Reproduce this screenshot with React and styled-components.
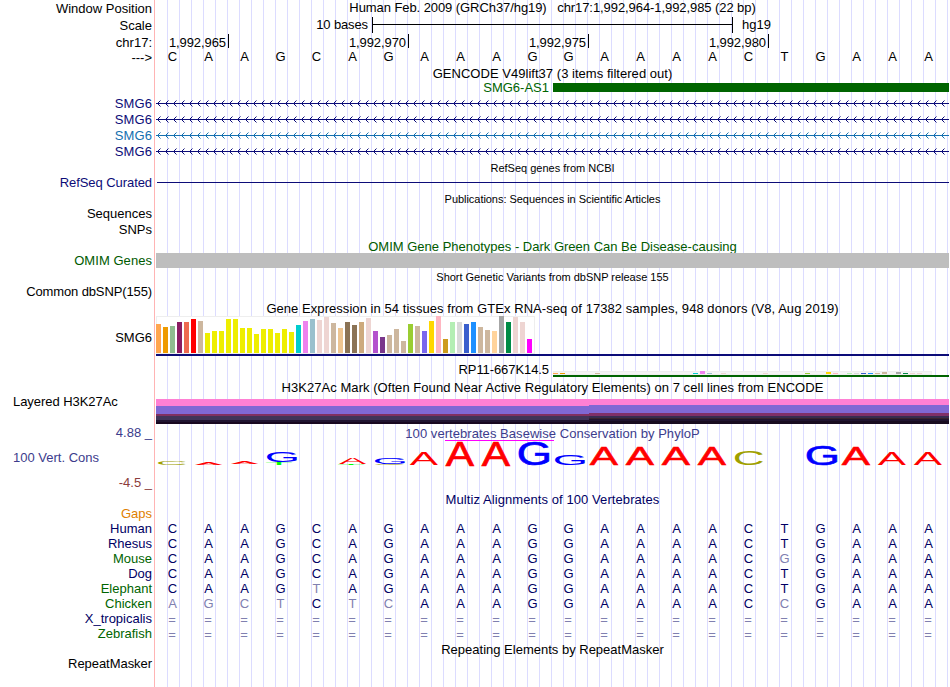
import React from "react";
import styled, { createGlobalStyle } from "styled-components";

const GlobalStyle = createGlobalStyle`
  html, body { margin: 0; padding: 0; background: #fff; }
  body { overflow: hidden; font: 13px/16px "Liberation Sans", Arial, sans-serif; color: #000; }
`;

const NAVY = "#0c0c78";
const ALIGN = "#000064";
const GREEN = "#006400";

const Browser = styled.main`
  display: flex;
  flex-direction: column;
  width: 949px;
  height: 687px;
  overflow: hidden;
  background:
    linear-gradient(#ffb4b4, #ffb4b4) 154px 0 / 1px 100% no-repeat,
    repeating-linear-gradient(90deg, #dcdcff 0 1px, transparent 1px 12px) 167px 0 / 782px 100% no-repeat,
    #fff;
`;

const Row = styled.section`
  display: grid;
  grid-template-columns: 154px 795px;
  flex: none;
  height: ${(p) => p.$h}px;
`;

const Label = styled.div`
  box-sizing: border-box;
  height: 16px;
  margin-top: ${(p) => p.$drop || 0}px;
  padding: ${(p) => (p.$left ? "0 0 0 13px" : "0 2px 0 0")};
  text-align: ${(p) => (p.$left ? "left" : "right")};
  letter-spacing: ${(p) => p.$track || 0}px;
  color: ${(p) => p.$color || "#000"};
  white-space: pre;
`;

const Title = styled.h2`
  grid-column: 2;
  height: 16px;
  margin: ${(p) => p.$drop || 0}px 0 0;
  padding-left: 2px;
  font-weight: normal;
  font-size: ${(p) => (p.$small ? 11 : 13)}px;
  line-height: 16px;
  letter-spacing: ${(p) => p.$track || 0}px;
  text-align: center;
  white-space: pre;
  color: ${(p) => p.$color || "#000"};
`;

const ScaleTrack = styled.div`
  display: flex;
`;
const ScaleText = styled.span`
  width: 214px;
  text-align: right;
  letter-spacing: -0.12px;
`;
const ScaleBar = styled.div`
  box-sizing: border-box;
  width: 361px;
  height: 16px;
  margin: 0 9px 0 4px;
  border: solid #000;
  border-width: 0 1px;
  background: linear-gradient(#000, #000) 0 7px / 100% 1px no-repeat;
`;

const TickTrack = styled.div`
  display: grid;
  grid-template-columns: 75px repeat(3, 180px);
`;
const Tick = styled.div`
  height: 14px;
  border-right: 1px solid #000;
  padding-right: 2px;
  line-height: 18px;
  letter-spacing: -0.08px;
  text-align: right;
`;

const Bases = styled.div`
  display: grid;
  grid-template-columns: repeat(22, 36px);
  padding-left: ${(p) => (p.$gap ? 0 : 0.5)}px;
  padding-top: ${(p) => (p.$gap ? 1 : 0)}px;
  color: ${(p) => p.$color || "#000"};
`;
const Base = styled.span`
  text-align: center;
  color: ${(p) => (p.$faint ? "#8080b0" : "inherit")};
`;

const ItemTrack = styled.div`
  display: flex;
`;
const ItemLabel = styled.span`
  box-sizing: border-box;
  width: 399px;
  padding-right: 4px;
  padding-top: ${(p) => p.$drop || 0}px;
  text-align: right;
  letter-spacing: ${(p) => p.$track || 0}px;
  color: ${(p) => p.$color || "#000"};
`;
const Exon = styled.div`
  width: 396px;
  height: 9px;
  margin-top: 3px;
  background: #006400;
`;
const Intron = styled.svg`
  display: block;
  width: 793px;
  height: 16px;
  margin-left: 2px;
`;
const ThinLine = styled.div`
  height: 1px;
  margin: 7px 0 0 3px;
  background: ${NAVY};
`;
const GreyBar = styled.div`
  height: 15px;
  margin-left: 2px;
  background: #bebebe;
`;

const ExpressionTrack = styled.div`
  display: flex;
  flex-direction: column;
  width: ${(p) => p.$w}px;
  margin-left: ${(p) => p.$x}px;
  padding-top: ${(p) => p.$drop || 0}px;
`;
const BarBox = styled.div`
  box-sizing: border-box;
  display: flex;
  align-items: flex-end;
  gap: 2px;
  width: 379px;
  height: ${(p) => p.$h}px;
  padding-bottom: 1px;
  background: ${(p) => (p.$flat ? "#f4f4f4" : "#fff")};
  box-shadow: inset 0 0 0 1px #eee;
`;
const Bar = styled.i`
  flex: none;
  width: 5px;
`;
const GeneLine = styled.div`
  height: 2px;
  background: ${(p) => p.$color};
`;

const Signal = styled.div`
  display: grid;
  grid-template-columns: 433px 360px;
  margin-left: 2px;
`;
const SignalPart = styled.div`
  background: ${(p) =>
    p.$high
      ? "linear-gradient(#ff80d4 0 6px, #8068d4 6px 14px, #803068 14px 17px, #382c50 17px 19px, #38242c 19px 20px, #201430 20px 22px, #180c20 22px)"
      : "linear-gradient(#ff80d4 0 7px, #8068d4 7px 15px, #803060 15px 17px, #403458 17px 21px, #201430 21px 23px, #180820 23px)"};
`;

const ConsLabels = styled.div`
  display: flex;
  flex-direction: column;
  gap: 9px;
  padding-top: 1px;
`;
const ConsTrack = styled.div`
  display: flex;
  flex-direction: column;
`;
const Logo = styled.svg`
  display: block;
  width: 795px;
  height: 40px;
  margin-top: -2px;
  overflow: visible;
`;

const HUMAN = "CAAGCAGAAAGGAAAACTGAAA";

const SPECIES = [
  { name: "Human", color: ALIGN, seq: HUMAN, faint: [] },
  { name: "Rhesus", color: ALIGN, seq: HUMAN, faint: [] },
  { name: "Mouse", color: GREEN, seq: "CAAGCAGAAAGGAAAACGGAAA", faint: [17] },
  { name: "Dog", color: ALIGN, seq: HUMAN, faint: [] },
  { name: "Elephant", color: GREEN, seq: "CAAGTAGAAAGGAAAACTGAAA", faint: [4] },
  { name: "Chicken", color: GREEN, seq: "AGCTCTCAAAGGAAAACCGAAA", faint: [0, 1, 2, 3, 5, 6, 17] },
  { name: "X_tropicalis", color: ALIGN, seq: "=".repeat(22), gap: true },
  { name: "Zebrafish", color: GREEN, seq: "=".repeat(22), gap: true },
];

const TISSUES = [
  "#ffa54f", "#ee9a00", "#8fbc8f", "#8b1c62", "#ee6a50", "#ff0000", "#cdb79e",
  ...Array(13).fill("#eeee00"),
  "#00cdcd", "#ee82ee", "#9ac0cd", "#eed5d2", "#eed5d2", "#cdb79e", "#eec591",
  "#8b7355", "#8b7355", "#cdaa7d", "#eed5d2", "#b452cd", "#7a378b", "#cdb79e",
  "#cdb79e", "#cdb79e", "#9acd32", "#cdb79e", "#7a67ee", "#ffd700", "#ffb6c1",
  "#cd9b1d", "#b4eeb4", "#d9d9d9", "#3a5fcd", "#1e90ff", "#cdb79e", "#cdb79e",
  "#ffd39b", "#a6a6a6", "#008b45", "#eed5d2", "#eed5d2", "#ff00ff",
];
const SMG6_LEVELS = [
  29, 26, 27, 31, 31, 34, 32, 20, 22, 22, 34, 34, 25, 25, 19, 24, 24, 20, 24, 21,
  28, 32, 34, 33, 36, 30, 25, 31, 28, 31, 35, 22, 16, 18, 24, 12, 29, 27, 22, 32,
  37, 14, 31, 31, 29, 31, 26, 23, 22, 37, 31, 36, 31, 14,
];
const RP11 = {
  0: 1, 1: 1, 6: 1, 20: 1, 21: 3, 22: 1, 24: 1, 30: 1, 36: 1, 39: 2, 40: 1, 42: 1,
  43: 1, 44: 1, 45: 1, 46: 1, 47: 2, 49: 2, 50: 1, 51: 1, 52: 1,
};
const RP11_LEVELS = TISSUES.map((_, i) => RP11[i] || 0);

const INK = { A: "#ff0000", C: "#a0a000", G: "#0000ff", T: "#00ff00" };
/* letter, left, ink width, ink top, ink bottom */
const LOGO = [
  ["C", 4, 28, 21, 25], ["A", 41, 27, 23, 25], ["A", 77, 27, 22, 24],
  ["T", 112, 26, 22, 25], ["G", 113, 30, 11, 22],
  ["T", 184, 26, 24, 25], ["A", 185, 27, 18, 24],
  ["C", 221, 29, 24, 25], ["G", 221, 30, 18, 24],
  ["A", 256, 28, 12, 25], ["A", 292, 28, 2, 25.5], ["A", 328, 28, 2, 25.5],
  ["G", 365, 30, 2, 25.5], ["G", 401, 30, 14, 25], ["A", 436, 28, 7, 25],
  ["A", 472, 28, 7, 25], ["A", 508, 28, 7, 25], ["A", 544, 28, 7, 25],
  ["C", 581, 28, 11, 25], ["G", 653, 30, 5, 25], ["A", 688, 28, 7, 25],
  ["A", 724, 28, 12, 25], ["A", 760, 28, 12, 25],
];
/* glyph extents per em: [left bearing, ink width, overshoot below baseline, ink height] */
const EXTENT = {
  A: [0.003, 0.661, 0, 0.688],
  C: [0.05, 0.636, -0.01, 0.708],
  G: [0.05, 0.662, -0.01, 0.708],
  T: [0.022, 0.567, 0, 0.688],
};

function LogoLetter({ item: [ch, x, w, top, bottom] }) {
  const [lsb, iw, ib, ih] = EXTENT[ch];
  const sx = w / (iw * 100);
  const sy = (bottom - top) / (ih * 100);
  const tx = x - lsb * 100 * sx;
  const ty = bottom + ib * 100 * sy;
  const weight = bottom - top > 16 ? 2 : 0;
  return (
    <text
      transform={`matrix(${sx} 0 0 ${sy} ${tx} ${ty})`}
      fontSize="100"
      fontFamily="Liberation Sans, Arial, sans-serif"
      fill={INK[ch]}
      stroke={weight ? INK[ch] : "none"}
      strokeWidth={weight}
    >
      {ch}
    </text>
  );
}

function BaseRow({ seq, color, faint = [], gap }) {
  return (
    <Bases $color={color} $gap={gap}>
      {[...seq].map((b, i) => (
        <Base key={i} $faint={gap || faint.includes(i)}>{b}</Base>
      ))}
    </Bases>
  );
}

function GeneIntron({ color }) {
  const id = `chevron-${color.slice(1)}`;
  return (
    <Intron viewBox="0 0 793 16">
      <defs>
        <pattern id={id} x="0" y="0" width="8" height="16" patternUnits="userSpaceOnUse">
          <path d="M4.5 4.5 L1.5 7.5 L4.5 10.5" fill="none" stroke={color} strokeWidth="1" />
        </pattern>
      </defs>
      <rect x="0" y="7" width="793" height="1" fill={color} />
      <rect width="793" height="16" fill={`url(#${id})`} />
    </Intron>
  );
}

function Expression({ levels, h, flat }) {
  return (
    <BarBox $h={h} $flat={flat}>
      {levels.map((v, i) => (
        <Bar key={i} style={{ height: v, background: TISSUES[i] }} />
      ))}
    </BarBox>
  );
}

export default function App() {
  return (
    <>
      <GlobalStyle />
      <Browser>
        <Row $h={17}>
          <Label $drop={1}>Window Position</Label>
          <Title $track={-0.075}>{"Human Feb. 2009 (GRCh37/hg19)   chr17:1,992,964-1,992,985 (22 bp)"}</Title>
        </Row>
        <Row $h={17}>
          <Label $drop={1}>Scale</Label>
          <ScaleTrack>
            <ScaleText>10 bases</ScaleText>
            <ScaleBar />
            <span>hg19</span>
          </ScaleTrack>
        </Row>
        <Row $h={15}>
          <Label $drop={1}>chr17:</Label>
          <TickTrack>
            {["1,992,965", "1,992,970", "1,992,975", "1,992,980"].map((t) => (
              <Tick key={t}>{t}</Tick>
            ))}
          </TickTrack>
        </Row>
        <Row $h={17}>
          <Label $drop={1}>{"--->"}</Label>
          <BaseRow seq={HUMAN} />
        </Row>
        <Row $h={14}>
          <Title $track={0.03}>GENCODE V49lift37 (3 items filtered out)</Title>
        </Row>
        <Row $h={16}>
          <span />
          <ItemTrack>
            <ItemLabel $color="#006400">SMG6-AS1</ItemLabel>
            <Exon />
          </ItemTrack>
        </Row>
        {[NAVY, NAVY, "#1470b0", NAVY].map((c, i) => (
          <Row $h={16} key={i}>
            <Label $color={c} $track={0.1}>SMG6</Label>
            <GeneIntron color={c} />
          </Row>
        ))}
        <Row $h={15}>
          <Title $small>RefSeq genes from NCBI</Title>
        </Row>
        <Row $h={16}>
          <Label $color={NAVY} $track={-0.07}>RefSeq Curated</Label>
          <ThinLine />
        </Row>
        <Row $h={15}>
          <Title $small $track={-0.04}>Publications: Sequences in Scientific Articles</Title>
        </Row>
        <Row $h={16}>
          <Label>Sequences</Label>
        </Row>
        <Row $h={16}>
          <Label>SNPs</Label>
        </Row>
        <Row $h={15}>
          <Title $drop={1} $color="#005a00">OMIM Gene Phenotypes - Dark Green Can Be Disease-causing</Title>
        </Row>
        <Row $h={16}>
          <Label $color="#005a00" $track={0.05}>OMIM Genes</Label>
          <GreyBar />
        </Row>
        <Row $h={15}>
          <Title $small $track={-0.02}>Short Genetic Variants from dbSNP release 155</Title>
        </Row>
        <Row $h={16}>
          <Label $track={-0.12}>Common dbSNP(155)</Label>
        </Row>
        <Row $h={16}>
          <Title $drop={1} $track={0.055}>Gene Expression in 54 tissues from GTEx RNA-seq of 17382 samples, 948 donors (V8, Aug 2019)</Title>
        </Row>
        <Row $h={41}>
          <Label $drop={14}>SMG6</Label>
          <ExpressionTrack $x={2} $w={793}>
            <Expression levels={SMG6_LEVELS} h={38} />
            <GeneLine $color={NAVY} />
          </ExpressionTrack>
        </Row>
        <Row $h={20}>
          <span />
          <ItemTrack>
            <ItemLabel $drop={5} $track={-0.08}>RP11-667K14.5</ItemLabel>
            <ExpressionTrack $x={0} $w={396} $drop={14}>
              <Expression levels={RP11_LEVELS} h={4} flat />
              <GeneLine $color="#006400" />
            </ExpressionTrack>
          </ItemTrack>
        </Row>
        <Row $h={22}>
          <Title $drop={3} $track={0.05}>H3K27Ac Mark (Often Found Near Active Regulatory Elements) on 7 cell lines from ENCODE</Title>
        </Row>
        <Row $h={25}>
          <Label $left $drop={-5} $track={-0.05}>Layered H3K27Ac</Label>
          <Signal>
            <SignalPart />
            <SignalPart $high />
          </Signal>
        </Row>
        <Row $h={68}>
          <ConsLabels>
            <Label $color="#3c3c8c">4.88 _</Label>
            <Label $left $color="#3c3c8c">100 Vert. Cons</Label>
            <Label $color="#8c3c3c">-4.5 _</Label>
          </ConsLabels>
          <ConsTrack>
            <Title $drop={2} $track={0.05} $color="#3c3c8c">100 vertebrates Basewise Conservation by PhyloP</Title>
            <Logo viewBox="0 0 795 40">
              <rect x="291" y="0" width="109" height="1" fill="#ff00ff" />
              {LOGO.map((item, i) => <LogoLetter key={i} item={item} />)}
            </Logo>
          </ConsTrack>
        </Row>
        <Row $h={14}>
          <Title $color={ALIGN} $track={0.08}>Multiz Alignments of 100 Vertebrates</Title>
        </Row>
        <Row $h={15}>
          <Label $color="#e08000">Gaps</Label>
        </Row>
        {SPECIES.map((s) => (
          <Row $h={15} key={s.name}>
            <Label $color={s.color}>{s.name}</Label>
            <BaseRow seq={s.seq} color={ALIGN} faint={s.faint} gap={s.gap} />
          </Row>
        ))}
        <Row $h={15}>
          <Title $drop={1}>Repeating Elements by RepeatMasker</Title>
        </Row>
        <Row $h={31}>
          <Label $track={-0.05}>RepeatMasker</Label>
        </Row>
      </Browser>
    </>
  );
}
